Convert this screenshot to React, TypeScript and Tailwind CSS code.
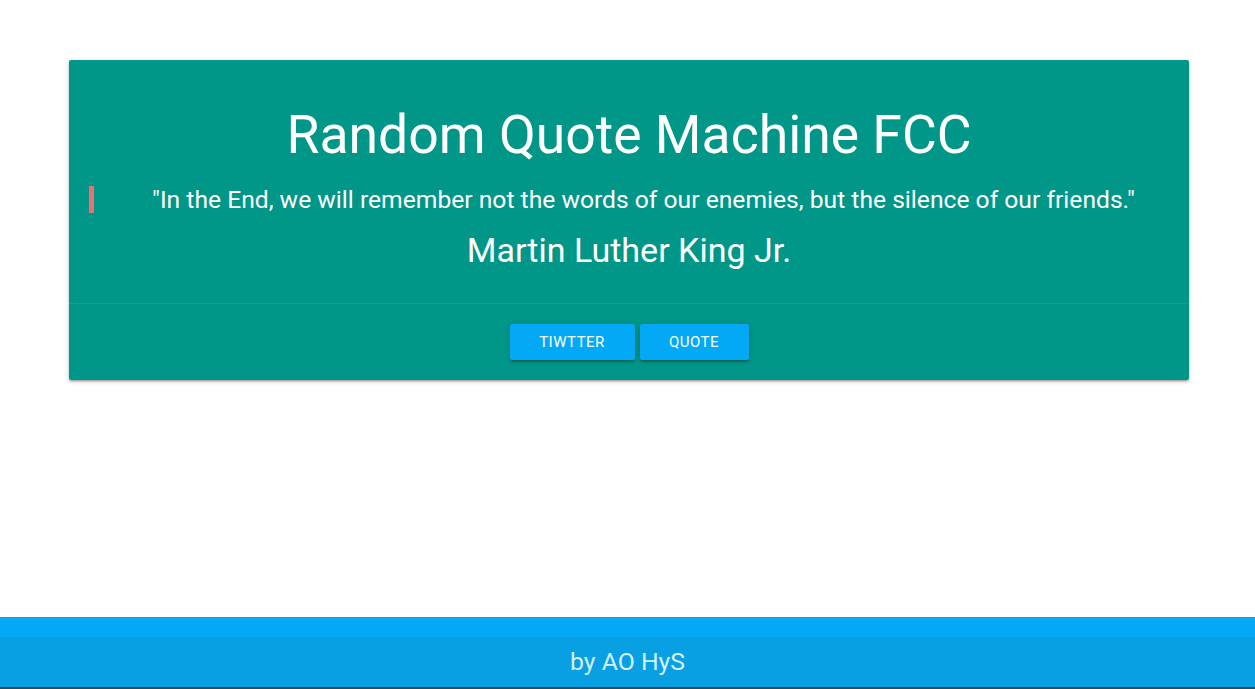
const QUOTE = {
  text: "In the End, we will remember not the words of our enemies, but the silence of our friends.",
  author: "Martin Luther King Jr.",
};

const cardShadow =
  "shadow-[0_2px_2px_0_rgba(0,0,0,0.14),0_3px_1px_-2px_rgba(0,0,0,0.12),0_1px_5px_0_rgba(0,0,0,0.2)]";

function ActionButton({ label, width }: { label: string; width: string }) {
  return (
    <button
      className={`${width} h-[36px] rounded-[2px] bg-[#03a9f4] text-[15px] uppercase tracking-[0.5px] text-white ${cardShadow}`}
    >
      {label}
    </button>
  );
}

export default function App() {
  return (
    <div className="flex min-h-screen flex-col bg-white font-['Roboto',sans-serif]">
      <main className="flex-1 pt-[60px]">
        <div className={`ml-[69px] w-[1120px] rounded-[2px] bg-[#009688] text-white ${cardShadow}`}>
          <div className="px-[20px] pt-[44px] pb-[35px]">
            <h1 className="text-center text-[53.5px] leading-[62px] font-normal">Random Quote Machine FCC</h1>
            <blockquote className="my-[20px] border-l-[5px] border-[#ee6e73] pl-[24px] text-center text-[24.65px] leading-[27px]">
              "{QUOTE.text}"
            </blockquote>
            <h2 className="text-center text-[34px] leading-[35px] font-normal">{QUOTE.author}</h2>
          </div>
          <div className="flex justify-center gap-[5px] border-t border-[rgba(160,160,160,0.2)] py-[20px]">
            <ActionButton label="Tiwtter" width="w-[125px]" />
            <ActionButton label="Quote" width="w-[109px]" />
          </div>
        </div>
      </main>
      <footer className="bg-[#03a9f4] pt-[20px]">
        <div className="flex h-[50px] items-center justify-center bg-[#09a0e3] text-[24.8px] text-[#d4f0fc]">
          by AO HyS
        </div>
        <div className="h-[2px] bg-[#37474f]" />
      </footer>
    </div>
  );
}
